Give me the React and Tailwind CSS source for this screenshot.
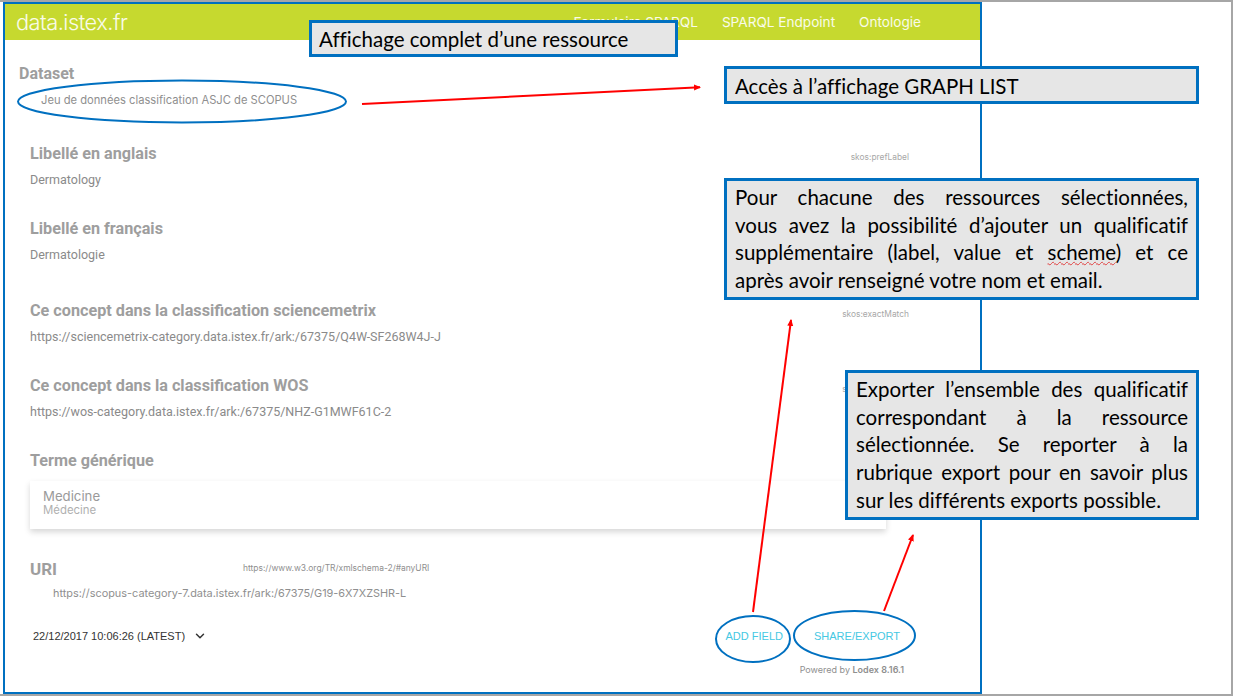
import { ChevronDown } from "lucide-react";

const labelClass = "font-['Roboto',sans-serif] font-bold text-[#9e9e9e]";
const calloutClass =
  "absolute z-10 border-[3px] border-[#0070c0] bg-[#e6e6e6] font-['Lato',sans-serif] text-[20.5px] leading-[27.7px] text-black [font-variant-ligatures:none]";
const justifiedLine = "whitespace-nowrap text-justify [text-align-last:justify]";

const Field = ({ label, value, tag, className }) => (
  <div className={`relative pl-[25px] pr-[72px] ${className}`}>
    <div className={`${labelClass} text-[16.2px] leading-5`}>{label}</div>
    <div className="mt-[6px] font-['Roboto',sans-serif] text-[12.5px] leading-5 text-[#8a8a8a]">
      {value}
    </div>
    {tag && (
      <div className="absolute right-[71px] top-[7px] font-['Inter',sans-serif] text-[8.4px] leading-3 text-[#a8a8a8]">
        {tag}
      </div>
    )}
  </div>
);

// fleches et ellipses posees par dessus la capture
const Overlay = () => (
  <svg
    className="absolute inset-0 z-20 pointer-events-none"
    width="1233"
    height="696"
    viewBox="0 0 1233 696"
    fill="none"
  >
    <defs>
      <marker id="head" markerWidth="8" markerHeight="8" refX="6" refY="3" orient="auto" markerUnits="userSpaceOnUse">
        <path d="M0 0L7 3L0 6Z" fill="#ff0000" />
      </marker>
    </defs>
    <ellipse cx="182" cy="101.5" rx="164" ry="21" stroke="#0070c0" strokeWidth="2" />
    <ellipse cx="753" cy="639" rx="37" ry="23" stroke="#0070c0" strokeWidth="2" />
    <ellipse cx="854.5" cy="635.5" rx="60.5" ry="24.5" stroke="#0070c0" strokeWidth="2" />
    <path d="M362 104L700 87.2" stroke="#ff0000" strokeWidth="2" markerEnd="url(#head)" />
    <path d="M753 612L791 320" stroke="#ff0000" strokeWidth="2" markerEnd="url(#head)" />
    <path d="M884 611L913 535" stroke="#ff0000" strokeWidth="2" markerEnd="url(#head)" />
  </svg>
);

export default function App() {
  return (
    <div className="relative h-[696px] w-[1233px] overflow-hidden border-y-2 border-r-2 border-[#a6a6a6] bg-white">
      <div className="ml-[3px] flex h-[692px] w-[979px] flex-col border-2 border-[#0070c0] bg-white">
        <header className="flex h-[36px] shrink-0 items-center justify-between bg-[#c6d92f] pl-[11px] pr-[59px] font-['Inter',sans-serif] text-white/90">
          <span className="text-[21.8px] font-light tracking-[-0.5px]">data.istex.fr</span>
          <nav className="flex gap-[24px] text-[13.6px]">
            <span>Formulaire SPARQL</span>
            <span>SPARQL Endpoint</span>
            <span>Ontologie</span>
          </nav>
        </header>

        <main className="flex flex-1 flex-col">
          <div className="mt-[24px] pl-[14px]">
            <div className={`${labelClass} text-[16px] leading-5`}>Dataset</div>
            <div className="ml-[22px] mt-[6px] font-['Inter',sans-serif] text-[11.2px] leading-5 text-[#8f8f8f]">
              Jeu de données classification ASJC de SCOPUS
            </div>
          </div>

          <Field className="mt-[34px]" label="Libellé en anglais" value="Dermatology" tag="skos:prefLabel" />
          <Field className="mt-[29px]" label="Libellé en français" value="Dermatologie" />
          <Field
            className="mt-[36px]"
            label="Ce concept dans la classification sciencemetrix"
            value="https://sciencemetrix-category.data.istex.fr/ark:/67375/Q4W-SF268W4J-J"
            tag="skos:exactMatch"
          />
          <Field
            className="mt-[29px]"
            label="Ce concept dans la classification WOS"
            value="https://wos-category.data.istex.fr/ark:/67375/NHZ-G1MWF61C-2"
            tag="skos:exactMatch"
          />

          <div className="mt-[29px] pl-[25px] pr-[94px]">
            <div className={`${labelClass} text-[16.2px] leading-5`}>Terme générique</div>
            <div className="mt-[10px] h-[48px] bg-white pl-[13px] pt-[7px] font-['Inter',sans-serif] shadow-[0_3px_6px_rgba(0,0,0,0.16)]">
              <div className="text-[13.2px] leading-[16px] text-[#9a9a9a]">Medicine</div>
              <div className="text-[11.4px] leading-[13px] text-[#b0b0b0]">Médecine</div>
            </div>
          </div>

          <div className="relative mt-[30px] pl-[25px]">
            <div className={`${labelClass} text-[17px] leading-5`}>URI</div>
            <div className="absolute left-[238px] top-[1px] font-['Inter',sans-serif] text-[8.45px] leading-4 text-[#8f8f8f]">
              https://www.w3.org/TR/xmlschema-2/#anyURI
            </div>
            <div className="ml-[23px] mt-[4px] font-['Inter',sans-serif] text-[10.9px] leading-5 text-[#8f8f8f]">
              https://scopus-category-7.data.istex.fr/ark:/67375/G19-6X7XZSHR-L
            </div>
          </div>

          <div className="mt-[25px] flex items-center justify-between pl-[28px] pr-[80px]">
            <div className="flex items-center gap-[8px] font-['Liberation_Sans',sans-serif] text-[11px] text-[#333333]">
              <span>22/12/2017 10:06:26 (LATEST)</span>
              <ChevronDown size={14} strokeWidth={2.5} />
            </div>
            <div className="flex font-['Liberation_Sans',sans-serif] text-[11px] text-[#45c8e3]">
              <span className="mr-[31px]">ADD FIELD</span>
              <span>SHARE/EXPORT</span>
            </div>
          </div>

          <div className="mt-[18px] pr-[76px] text-right font-['Inter',sans-serif] text-[9px] text-[#8f8f8f]">
            Powered by <span className="font-semibold">Lodex 8.16.1</span>
          </div>
        </main>
      </div>

      <div className={`${calloutClass} left-[309px] top-[18px] h-[37px] w-[369px] pl-[7px] pt-[3px]`}>
        Affichage complet d’une ressource
      </div>
      <div className={`${calloutClass} left-[724px] top-[64px] h-[38px] w-[475px] pl-[8px] pt-[4px]`}>
        Accès à l’affichage GRAPH LIST
      </div>
      <div className={`${calloutClass} left-[724px] top-[176px] h-[122px] w-[475px] px-[8px] pt-[3px]`}>
        <div className={justifiedLine}>Pour chacune des ressources sélectionnées,</div>
        <div className={justifiedLine}>vous avez la possibilité d’ajouter un qualificatif</div>
        <div className={justifiedLine}>
          supplémentaire (label, value et{" "}
          <span className="underline decoration-wavy decoration-[#e04040] decoration-1">scheme</span>) et ce
        </div>
        <div className="whitespace-nowrap">après avoir renseigné votre nom et email.</div>
      </div>
      <div className={`${calloutClass} left-[845px] top-[368px] h-[150px] w-[354px] px-[8px] pt-[3px]`}>
        <div className={justifiedLine}>Exporter l’ensemble des qualificatif</div>
        <div className={justifiedLine}>correspondant à la ressource</div>
        <div className={justifiedLine}>sélectionnée. Se reporter à la</div>
        <div className={justifiedLine}>rubrique export pour en savoir plus</div>
        <div className="whitespace-nowrap">sur les différents exports possible.</div>
      </div>

      <div className="absolute -top-[2px] left-0">
        <Overlay />
      </div>
    </div>
  );
}
